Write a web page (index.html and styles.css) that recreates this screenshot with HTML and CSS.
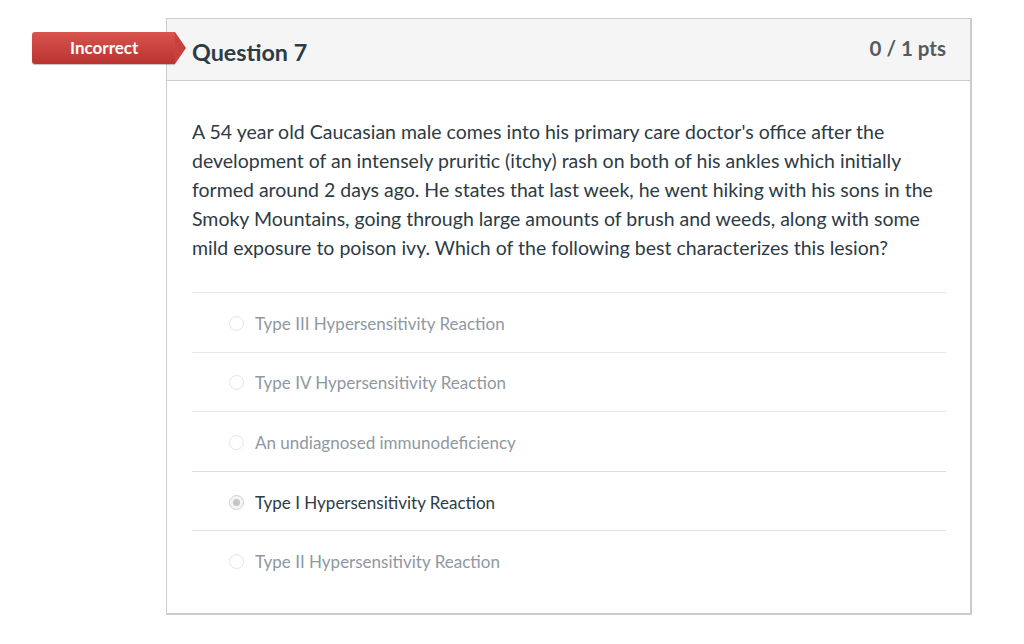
FILE: index.html
```html
<!DOCTYPE html>
<html>
<head>
<meta charset="utf-8">
<link rel="stylesheet" href="styles.css">
</head>
<body>
<div class="page">
  <div class="question-wrap">
    <div class="badge">Incorrect</div>
    <div class="card">
      <div class="card-header">
        <h2 class="q-title">Question 7</h2>
        <div class="pts">0 / 1 pts</div>
      </div>
      <div class="card-body">
        <p class="q-text">A 54 year old Caucasian male comes into his primary care doctor's office after the development of an intensely pruritic (itchy) rash on both of his ankles which initially formed around 2 days ago. He states that last week, he went hiking with his sons in the Smoky Mountains, going through large amounts of brush and weeds, along with some mild exposure to poison ivy. Which of the following best characterizes this lesion?</p>
        <div class="answers">
          <div class="answer"><span class="radio"></span><span class="label">Type III Hypersensitivity Reaction</span></div>
          <div class="answer"><span class="radio"></span><span class="label">Type IV Hypersensitivity Reaction</span></div>
          <div class="answer"><span class="radio"></span><span class="label">An undiagnosed immunodeficiency</span></div>
          <div class="answer selected"><span class="radio"></span><span class="label">Type I Hypersensitivity Reaction</span></div>
          <div class="answer"><span class="radio"></span><span class="label">Type II Hypersensitivity Reaction</span></div>
        </div>
      </div>
    </div>
  </div>
</div>
</body>
</html>
```

FILE: styles.css
```css
* { box-sizing: border-box; }
html, body { margin: 0; padding: 0; background: #fff; }
body { font-family: Lato, "Noto Sans", sans-serif; color: #2d3b45; }

.page { padding: 18px 52px 0 166px; }

.question-wrap { position: relative; }

.badge {
  position: absolute;
  left: -134px;
  top: 14px;
  width: 143px;
  height: 32px;
  background: linear-gradient(#d9534f, #b93430);
  color: #fff;
  font-size: 17px;
  font-weight: 700;
  line-height: 32px;
  padding-left: 38px;
  border-radius: 3px 0 0 3px;
  box-shadow: 0 1px 1px rgba(0,0,0,0.25);
  z-index: 2;
}
.badge::after {
  content: "";
  position: absolute;
  right: -11px;
  top: 0;
  width: 0;
  height: 0;
  border-top: 16px solid transparent;
  border-bottom: 16px solid transparent;
  border-left: 11px solid #c7423e;
}

.card {
  width: 806px;
  height: 597px;
  border: 1px solid #c7cdd1;
  border-right: 2px solid #c7cdd1;
  border-bottom: 2px solid #c7cdd1;
}

.card-header {
  height: 62px;
  background: #f5f5f5;
  border-bottom: 1px solid #c7cdd1;
  display: flex;
  justify-content: space-between;
  padding: 0 24px 0 25px;
}
.q-title {
  margin: 0;
  padding-top: 18px;
  font-size: 23.3px;
  font-weight: 700;
  color: #2d3b45;
  line-height: 30px;
}
.pts {
  padding-top: 15px;
  font-size: 20.5px;
  font-weight: 700;
  color: #555a5e;
  line-height: 28px;
}

.card-body { padding: 36px 24px 0 25px; }

.q-text {
  margin: 0;
  font-size: 19.5px;
  line-height: 29px;
  color: #2d3b45;
}

.answers { margin-top: 30px; }

.answer {
  height: 59.6px;
  border-top: 1px solid #e6e9ea;
  display: flex;
  align-items: center;
  padding-left: 37px;
  padding-top: 2px;
}
.answer:nth-child(4), .answer:nth-child(5) { border-top-color: #dcdfe1; }

.radio {
  width: 15px;
  height: 15px;
  border-radius: 50%;
  border: 1px solid #e3e5e7;
  background: #fff;
  margin-right: 11px;
  flex: none;
  position: relative;
}
.label {
  font-size: 17px;
  color: #8f989f;
}
.selected .label { color: #2d3b45; }
.selected .radio { border-color: #d0d3d5; background: #f4f4f4; }
.selected .radio::after {
  content: "";
  position: absolute;
  left: 3px;
  top: 3px;
  width: 7px;
  height: 7px;
  border-radius: 50%;
  background: #c3c6c8;
}
```
